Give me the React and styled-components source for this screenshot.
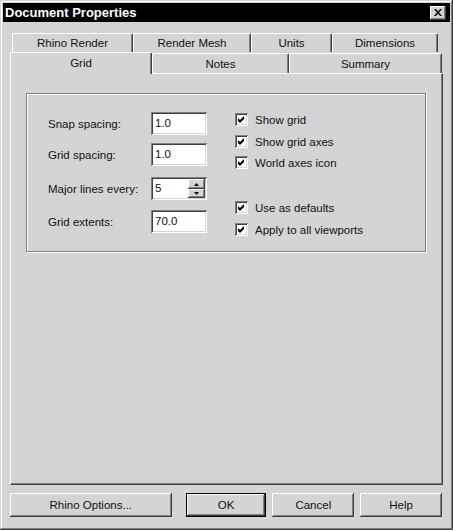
import React from 'react';
import styled, { createGlobalStyle, css } from 'styled-components';

const BG = '#d4d4d4';

const Global = createGlobalStyle`
  html, body { margin: 0; padding: 0; background: ${BG}; }
  body { font-family: "Liberation Sans", Arial, sans-serif; font-size: 11.5px; font-weight: 400; color: #111; }
`;

const raised = css`
  box-shadow: inset -1px -1px #404040, inset 1px 1px #ffffff, inset -2px -2px #808080, inset 2px 2px ${BG};
`;
const sunken = css`
  box-shadow: inset 1px 1px #808080, inset -1px -1px #ffffff, inset 2px 2px #404040, inset -2px -2px ${BG};
`;

const Window = styled.div`
  width: 453px;
  height: 530px;
  box-sizing: border-box;
  padding: 3px;
  background: ${BG};
  box-shadow: inset -1px -1px #404040, inset 1px 1px ${BG}, inset -2px -2px #808080, inset 2px 2px #ffffff;
  display: flex;
  flex-direction: column;
`;

const TitleBar = styled.div`
  height: 19px;
  background: #000;
  color: #fff;
  display: flex;
  align-items: center;
  justify-content: space-between;
  padding: 0 4px 0 2px;
  font-weight: bold;
  font-size: 13px;
`;

const CloseButton = styled.div`
  width: 16px;
  height: 14px;
  box-sizing: border-box;
  background: ${BG};
  ${raised};
  display: flex;
  align-items: center;
  justify-content: center;
`;

const Body = styled.div`
  flex: 1;
  display: flex;
  flex-direction: column;
  padding: 11px 8px 10px 7px;
`;

const TabRow = styled.div`
  display: flex;
  align-items: flex-end;
  height: ${p => p.$h}px;
  padding-left: ${p => p.$pl || 0}px;
  margin-top: ${p => p.$mt || 0}px;
`;

const Tab = styled.div`
  box-sizing: border-box;
  width: ${p => p.$w}px;
  height: ${p => p.$h}px;
  background: ${BG};
  border-top: 1px solid #fff;
  border-left: 1px solid #fff;
  border-right: 1px solid #404040;
  border-radius: 2px 2px 0 0;
  box-shadow: inset -1px 0 #808080;
  display: flex;
  align-items: center;
  justify-content: center;
  ${p => p.$active && css`
    position: relative;
    z-index: 1;
    margin-bottom: -1px;
    padding-bottom: 1px;
  `}
`;

const Panel = styled.div`
  box-sizing: border-box;
  width: 433px;
  height: 412px;
  border-top: 1px solid #fff;
  border-left: 1px solid #fff;
  border-right: 1px solid #404040;
  border-bottom: 1px solid #404040;
  box-shadow: inset -1px -1px #808080;
  padding: 19px 0 0 15px;
`;

const GroupBox = styled.div`
  box-sizing: border-box;
  width: 400px;
  height: 159px;
  border: 1px solid #808080;
  box-shadow: inset 1px 1px #fff, 1px 1px #fff;
  display: flex;
  padding: 18px 0 0 21px;
`;

const Column = styled.div`
  display: flex;
  flex-direction: column;
  margin-left: ${p => p.$ml || 0}px;
  padding-top: ${p => p.$pt || 0}px;
`;

const FieldRow = styled.div`
  display: flex;
  align-items: center;
  height: 23px;
  margin-top: ${p => p.$mt || 0}px;
`;

const Label = styled.div`
  width: 103px;
`;

const TextBox = styled.div`
  box-sizing: border-box;
  width: 56px;
  height: 23px;
  background: #fff;
  ${sunken};
  padding-left: 4px;
  line-height: 23px;
  display: flex;
`;

const SpinText = styled.div`
  flex: 1;
`;

const SpinButtons = styled.div`
  display: flex;
  flex-direction: column;
  width: 17px;
  padding: 2px 2px 2px 0;
  box-sizing: content-box;
`;

const SpinButton = styled.div`
  box-sizing: border-box;
  height: ${p => p.$h}px;
  background: ${BG};
  ${raised};
  display: flex;
  align-items: center;
  justify-content: center;
`;

const CheckRow = styled.div`
  display: flex;
  align-items: center;
  height: 13px;
  gap: 7px;
  margin-top: ${p => p.$mt || 0}px;
`;

const CheckBox = styled.div`
  box-sizing: border-box;
  width: 13px;
  height: 13px;
  background: #fff;
  ${sunken};
  display: flex;
  align-items: center;
  justify-content: center;
`;

const ButtonRow = styled.div`
  display: flex;
  margin-top: 8px;
  height: 24px;
`;

const Button = styled.div`
  box-sizing: border-box;
  width: ${p => p.$w}px;
  height: 24px;
  margin-left: ${p => p.$ml || 0}px;
  background: ${BG};
  ${raised};
  display: flex;
  align-items: center;
  justify-content: center;
  ${p => p.$default && css`
    border: 1px solid #000;
  `}
`;

const Check = () => (
  <svg width="7" height="7" viewBox="0 0 7 7">
    <path d="M0 2 L2 4 L6 0 L6 3 L2 7 L0 5 Z" fill="#000" />
  </svg>
);

const CloseIcon = () => (
  <svg width="8" height="7" viewBox="0 0 8 7">
    <path d="M0 0 H2 L4 2.5 L6 0 H8 L5 3.5 L8 7 H6 L4 4.5 L2 7 H0 L3 3.5 Z" fill="#000" />
  </svg>
);

const Arrow = ({ up }) => (
  <svg width="5" height="3" viewBox="0 0 5 3">
    <path d={up ? 'M2.5 0 L5 3 H0 Z' : 'M0 0 H5 L2.5 3 Z'} fill="#000" />
  </svg>
);

const fields = [
  { label: 'Snap spacing:', value: '1.0', mt: 0 },
  { label: 'Grid spacing:', value: '1.0', mt: 8 },
  { label: 'Major lines every:', value: '5', mt: 11, spin: true },
  { label: 'Grid extents:', value: '70.0', mt: 10 },
];

const checks = [
  { label: 'Show grid', mt: 0 },
  { label: 'Show grid axes', mt: 9 },
  { label: 'World axes icon', mt: 8 },
  { label: 'Use as defaults', mt: 32 },
  { label: 'Apply to all viewports', mt: 9 },
];

export default function App() {
  return (
    <>
      <Global />
      <Window>
        <TitleBar>
          <span>Document Properties</span>
          <CloseButton><CloseIcon /></CloseButton>
        </TitleBar>
        <Body>
          <TabRow $h={19} $pl={2}>
            <Tab $w={121} $h={19}>Rhino Render</Tab>
            <Tab $w={118} $h={19}>Render Mesh</Tab>
            <Tab $w={81} $h={19}>Units</Tab>
            <Tab $w={106} $h={19}>Dimensions</Tab>
          </TabRow>
          <TabRow $h={22} $mt={-1}>
            <Tab $w={142} $h={22} $active>Grid</Tab>
            <Tab $w={137} $h={20}>Notes</Tab>
            <Tab $w={153} $h={20}>Summary</Tab>
          </TabRow>
          <Panel>
            <GroupBox>
              <Column>
                {fields.map(f => (
                  <FieldRow key={f.label} $mt={f.mt}>
                    <Label>{f.label}</Label>
                    <TextBox>
                      <SpinText>{f.value}</SpinText>
                      {f.spin && (
                        <SpinButtons>
                          <SpinButton $h={10}><Arrow up /></SpinButton>
                          <SpinButton $h={9}><Arrow /></SpinButton>
                        </SpinButtons>
                      )}
                    </TextBox>
                  </FieldRow>
                ))}
              </Column>
              <Column $ml={28} $pt={1}>
                {checks.map(c => (
                  <CheckRow key={c.label} $mt={c.mt}>
                    <CheckBox><Check /></CheckBox>
                    <span>{c.label}</span>
                  </CheckRow>
                ))}
              </Column>
            </GroupBox>
          </Panel>
          <ButtonRow>
            <Button $w={162}>Rhino Options...</Button>
            <Button $w={81} $ml={14} $default>OK</Button>
            <Button $w={82} $ml={6}>Cancel</Button>
            <Button $w={82} $ml={6}>Help</Button>
          </ButtonRow>
        </Body>
      </Window>
    </>
  );
}
